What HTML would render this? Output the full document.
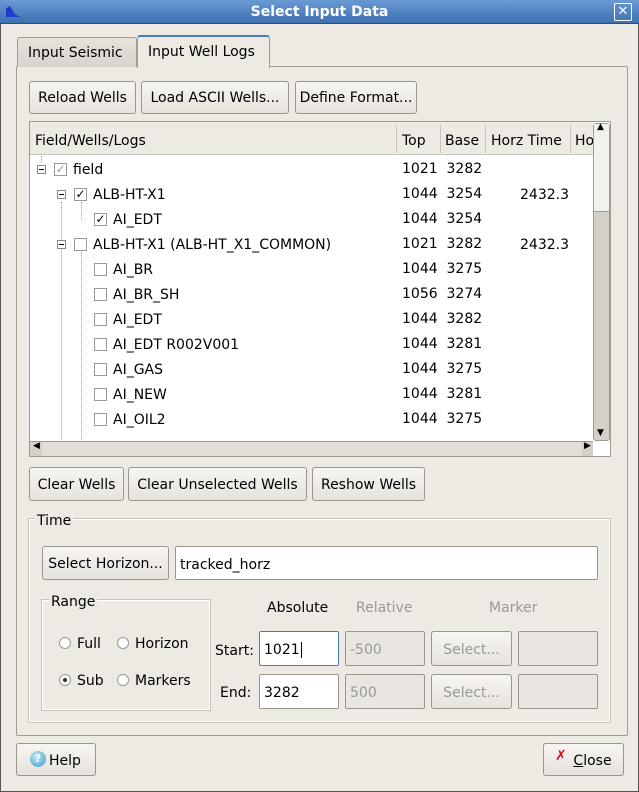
<!DOCTYPE html>
<html><head><style>
*{box-sizing:border-box;margin:0;padding:0}
body{width:639px;height:792px;background:#ede9e3;font-family:"DejaVu Sans","Liberation Sans",sans-serif;font-size:14px;color:#000;position:relative;overflow:hidden}
.a{position:absolute}
.btn{position:absolute;border:1px solid #9a958d;border-radius:3px;background:linear-gradient(#f7f5f2,#e6e2dc);text-align:center;white-space:nowrap}
.in{position:absolute;border:1px solid #9a958d;border-radius:2px;background:#fff;padding-left:4px}
.dis{background:#e9e6e1;color:#999}
.t{position:absolute;white-space:nowrap}
.cb{position:absolute;width:13px;height:13px;border:1px solid #999;background:#fff;font-size:12px;line-height:11px;text-align:center}
.ex{position:absolute;width:9px;height:9px;border:1px solid #888;background:#fff}
.ex:after{content:"";position:absolute;left:1px;top:3px;width:5px;height:1px;background:#000}
.rad{position:absolute;width:12px;height:12px;border:1px solid #999;border-radius:50%;background:#fff}
</style></head><body>
<div class="a" style="left:0;top:0;width:639px;height:792px;border:1px solid #555"></div>
<div class="a" style="left:0;top:0;width:639px;height:24px;background:linear-gradient(#6a9ad4,#3e6fb0);border-bottom:1px solid #2a4c80"></div>
<div class="a" style="left:6px;top:6px;width:14px;height:11px;background:#1e3cd0;clip-path:polygon(0 100%,0 20%,30% 0,60% 70%,100% 100%)"></div>
<div class="t" style="left:0;width:639px;top:4px;text-align:center;color:#fff;font-weight:bold;font-size:14px">Select Input Data</div>
<div class="a" style="left:614px;top:3px;width:18px;height:18px;border:1px solid #fff;border-radius:2px;color:#fff;font-size:13px;text-align:center;line-height:16px">✕</div>

<div class="a" style="left:16px;top:66px;width:612px;height:670px;border:1px solid #a09b93;border-radius:2px"></div>
<div class="a" style="left:17px;top:37px;width:120px;height:30px;border:1px solid #a09b93;border-bottom:none;border-radius:3px 3px 0 0;background:linear-gradient(#e6e2dc,#d8d3cc)"></div>
<div class="t" style="left:28px;top:45px">Input Seismic</div>
<div class="a" style="left:137px;top:35px;width:133px;height:33px;border:1px solid #a09b93;border-top:2px solid #4a7ab8;border-bottom:none;border-radius:3px 3px 0 0;background:#ede9e3"></div>
<div class="t" style="left:148px;top:44px">Input Well Logs</div>

<div class="btn" style="left:29px;top:81px;width:107px;height:33px;line-height:33px">Reload Wells</div>
<div class="btn" style="left:141px;top:81px;width:148px;height:33px;line-height:33px">Load ASCII Wells...</div>
<div class="btn" style="left:295px;top:81px;width:122px;height:33px;line-height:33px">Define Format...</div>

<div class="a" style="left:29px;top:121px;width:582px;height:336px;border:1px solid #a09b93;background:#fff"></div>
<div class="a" style="left:30px;top:122px;width:563px;height:33px;background:#ede9e3;border-bottom:1px solid #c8c3bc"></div>
<div class="t" style="left:35px;top:133px">Field/Wells/Logs</div>
<div class="a" style="left:396px;top:125px;width:1px;height:28px;background:#c8c3bc"></div>
<div class="a" style="left:440px;top:125px;width:1px;height:28px;background:#c8c3bc"></div>
<div class="a" style="left:485px;top:125px;width:1px;height:28px;background:#c8c3bc"></div>
<div class="a" style="left:570px;top:125px;width:1px;height:28px;background:#c8c3bc"></div>
<div class="t" style="left:402px;top:133px">Top</div>
<div class="t" style="left:445px;top:133px">Base</div>
<div class="t" style="left:491px;top:133px">Horz Time</div>
<div class="t" style="left:575px;top:133px;width:18px;overflow:hidden">Ho</div>
<div class="a" style="left:593px;top:123px;width:17px;height:318px;background:#d4d0c8;border:1px solid #a09b93;border-radius:3px"></div>
<div class="a" style="left:594px;top:124px;width:15px;height:88px;background:#f3f1ee;border-bottom:1px solid #a09b93"></div>
<div class="t" style="left:597px;top:122px;font-size:9px">▲</div>
<div class="t" style="left:597px;top:428px;font-size:9px">▼</div>
<div class="a" style="left:30px;top:441px;width:563px;height:15px;background:#d4d0c8;border-top:1px solid #a09b93"></div>
<div class="a" style="left:42px;top:442px;width:540px;height:14px;background:#e2ded8"></div>
<div class="t" style="left:33px;top:441px;font-size:9px">◀</div>
<div class="t" style="left:584px;top:441px;font-size:9px">▶</div>
<div class="a" style="left:30px;top:156px;width:563px;height:285px;overflow:hidden">
 <div class="a" style="left:11px;top:0;height:6px;border-left:1px dotted #aaa"></div>
 <div class="a" style="left:31px;top:46px;height:240px;border-left:1px dotted #aaa"></div>
 <div class="a" style="left:51px;top:96px;height:190px;border-left:1px dotted #aaa"></div>
 <div class="a" style="left:51px;top:46px;height:18px;border-left:1px dotted #aaa"></div>
</div>
<div style="position:absolute;left:0;top:0">
<div class="ex" style="left:37px;top:165px"></div><div class="cb" style="left:54px;top:163px;color:#999">✓</div><div class="t" style="left:73px;top:162px">field</div>
<div class="ex" style="left:57px;top:190px"></div><div class="cb" style="left:74px;top:188px">✓</div><div class="t" style="left:93px;top:187px">ALB-HT-X1</div>
<div class="cb" style="left:94px;top:213px">✓</div><div class="t" style="left:113px;top:212px">AI_EDT</div>
<div class="ex" style="left:57px;top:240px"></div><div class="cb" style="left:74px;top:238px"></div><div class="t" style="left:93px;top:237px">ALB-HT-X1 (ALB-HT_X1_COMMON)</div>
<div class="cb" style="left:94px;top:263px"></div><div class="t" style="left:113px;top:262px">AI_BR</div>
<div class="cb" style="left:94px;top:288px"></div><div class="t" style="left:113px;top:287px">AI_BR_SH</div>
<div class="cb" style="left:94px;top:313px"></div><div class="t" style="left:113px;top:312px">AI_EDT</div>
<div class="cb" style="left:94px;top:338px"></div><div class="t" style="left:113px;top:337px">AI_EDT R002V001</div>
<div class="cb" style="left:94px;top:363px"></div><div class="t" style="left:113px;top:362px">AI_GAS</div>
<div class="cb" style="left:94px;top:388px"></div><div class="t" style="left:113px;top:387px">AI_NEW</div>
<div class="cb" style="left:94px;top:413px"></div><div class="t" style="left:113px;top:412px">AI_OIL2</div>
</div>
<div class="t" style="left:402px;top:157px;line-height:25px">1021&nbsp;&nbsp;3282<br>1044&nbsp;&nbsp;3254<br>1044&nbsp;&nbsp;3254<br>1021&nbsp;&nbsp;3282<br>1044&nbsp;&nbsp;3275<br>1056&nbsp;&nbsp;3274<br>1044&nbsp;&nbsp;3282<br>1044&nbsp;&nbsp;3281<br>1044&nbsp;&nbsp;3275<br>1044&nbsp;&nbsp;3281<br>1044&nbsp;&nbsp;3275</div>
<div class="t" style="left:520px;top:187px">2432.3</div>
<div class="t" style="left:520px;top:237px">2432.3</div>

<div class="btn" style="left:29px;top:467px;width:95px;height:34px;line-height:34px">Clear Wells</div>
<div class="btn" style="left:128px;top:467px;width:179px;height:34px;line-height:34px">Clear Unselected Wells</div>
<div class="btn" style="left:312px;top:467px;width:113px;height:34px;line-height:34px">Reshow Wells</div>

<div class="a" style="left:29px;top:519px;width:581px;height:203px;border:1px solid #fff;outline:1px solid #c8c3bc"></div>
<div class="t" style="left:35px;top:513px;background:#ede9e3;padding:0 2px">Time</div>
<div class="btn" style="left:42px;top:546px;width:127px;height:34px;line-height:34px">Select Horizon...</div>
<div class="in" style="left:175px;top:546px;width:423px;height:34px;line-height:36px">tracked_horz</div>

<div class="a" style="left:42px;top:600px;width:168px;height:110px;border:1px solid #fff;outline:1px solid #c8c3bc"></div>
<div class="t" style="left:49px;top:594px;background:#ede9e3;padding:0 2px">Range</div>
<div class="rad" style="left:59px;top:637px"></div><div class="t" style="left:77px;top:636px">Full</div>
<div class="rad" style="left:117px;top:637px"></div><div class="t" style="left:135px;top:636px">Horizon</div>
<div class="rad" style="left:59px;top:674px"></div><div class="a" style="left:63px;top:678px;width:4px;height:4px;border-radius:50%;background:#333"></div><div class="t" style="left:77px;top:673px">Sub</div>
<div class="rad" style="left:117px;top:674px"></div><div class="t" style="left:135px;top:673px">Markers</div>

<div class="t" style="left:267px;top:600px">Absolute</div>
<div class="t" style="left:356px;top:600px;color:#999">Relative</div>
<div class="t" style="left:489px;top:600px;color:#999">Marker</div>
<div class="t" style="left:215px;top:643px">Start:</div>
<div class="t" style="left:220px;top:685px">End:</div>
<div class="in" style="left:259px;top:631px;width:80px;height:35px;line-height:37px;border-color:#4a7ab8">1021<span style="border-left:1px solid #000;margin-left:1px"></span></div>
<div class="in" style="left:259px;top:674px;width:80px;height:35px;line-height:37px">3282</div>
<div class="in dis" style="left:345px;top:631px;width:80px;height:35px;line-height:37px">-500</div>
<div class="in dis" style="left:345px;top:674px;width:80px;height:35px;line-height:37px">500</div>
<div class="btn" style="left:431px;top:631px;width:81px;height:35px;line-height:37px;color:#999">Select...</div>
<div class="btn" style="left:431px;top:674px;width:81px;height:35px;line-height:37px;color:#999">Select...</div>
<div class="in dis" style="left:518px;top:631px;width:80px;height:35px"></div>
<div class="in dis" style="left:518px;top:674px;width:80px;height:35px"></div>

<div class="btn" style="left:16px;top:743px;width:80px;height:33px;line-height:35px;text-align:left;padding-left:32px">Help</div>
<div class="a" style="left:30px;top:751px;width:16px;height:16px;border-radius:50%;background:radial-gradient(circle at 40% 35%,#bfe6f5,#3a9cc8);color:#fff;font-size:11px;font-weight:bold;text-align:center;line-height:16px">?</div>
<div class="btn" style="left:543px;top:743px;width:81px;height:33px;line-height:35px;padding-left:18px"><u>C</u>lose</div>
<div class="t" style="left:555px;top:748px;color:#d01010;font-weight:bold;font-size:14px">✗</div>
</body></html>
